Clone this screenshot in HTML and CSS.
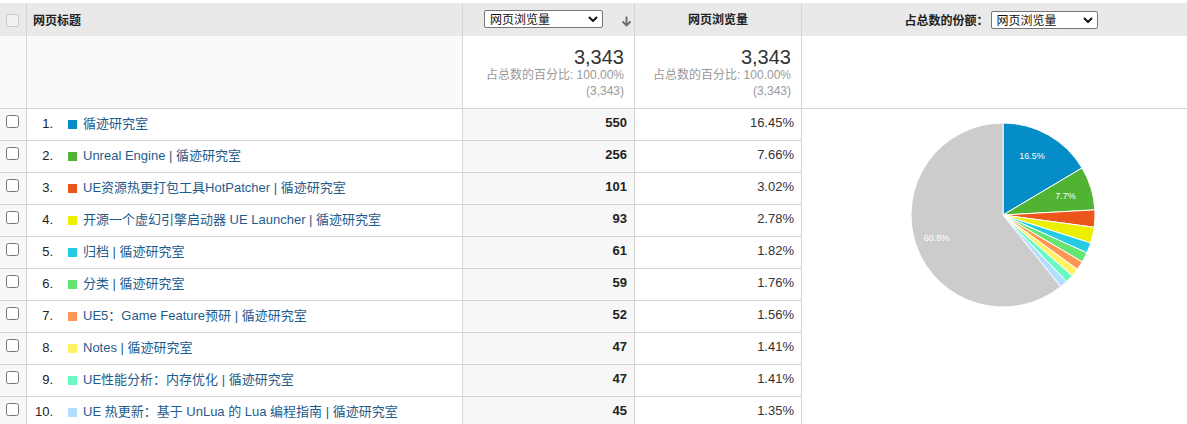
FILE: index.html
```html
<!DOCTYPE html>
<html lang="zh-CN">
<head>
<meta charset="utf-8">
<title>网页标题报告</title>
<link rel="stylesheet" href="styles.css">
</head>
<body>
<table class="report">
  <colgroup>
    <col class="c-cb">
    <col class="c-title">
    <col class="c-metric">
    <col class="c-pct">
    <col class="c-pie">
  </colgroup>
  <thead>
    <tr class="hdr">
      <th class="cb"><input type="checkbox" disabled></th>
      <th class="title">网页标题</th>
      <th class="metric">
        <div class="metric-head">
          <span class="sel w119"><select><option>网页浏览量</option></select><svg class="chev" viewBox="0 0 10 6" width="10" height="6"><path d="M1 1 L5 5 L9 1" fill="none" stroke="#111" stroke-width="2"/></svg></span>
          <svg class="sort" viewBox="0 0 11 11" width="11" height="11"><path d="M5.5 0.5 V9.5 M1.5 5.5 L5.5 9.5 L9.5 5.5" fill="none" stroke="#6b6b6b" stroke-width="1.8"/></svg>
        </div>
      </th>
      <th class="pct">网页浏览量</th>
      <th class="pie">
        <div class="pie-head">
          <span class="pie-label">占总数的份额：</span>
          <span class="sel w107"><select><option>网页浏览量</option></select><svg class="chev" viewBox="0 0 10 6" width="10" height="6"><path d="M1 1 L5 5 L9 1" fill="none" stroke="#111" stroke-width="2"/></svg></span>
        </div>
      </th>
    </tr>
  </thead>
  <tbody>
    <tr class="summary">
      <td class="cb"></td>
      <td class="title"></td>
      <td class="metric"><div class="big">3,343</div><div class="small">占总数的百分比: 100.00%</div><div class="small">(3,343)</div></td>
      <td class="pct"><div class="big">3,343</div><div class="small">占总数的百分比: 100.00%</div><div class="small">(3,343)</div></td>
      <td class="pie"></td>
    </tr>
    <tr class="row">
      <td class="cb"><input type="checkbox"></td>
      <td class="title"><span class="num">1.</span><span class="sq" style="background:#058dc7"></span><a href="#">循迹研究室</a></td>
      <td class="metric">550</td>
      <td class="pct">16.45%</td>
      <td class="pie chart" rowspan="10">
        <svg class="piechart" width="200" height="200" viewBox="0 0 200 200">
          <g stroke="#fff" stroke-width="1" stroke-linejoin="round">
            <path fill="#058dc7" d="M100,100 L100,8 A92,92 0 0,1 179.05,52.94 Z"/>
            <path fill="#50b432" d="M100,100 L179.05,52.94 A92,92 0 0,1 191.86,94.86 Z"/>
            <path fill="#ed561b" d="M100,100 L191.86,94.86 A92,92 0 0,1 191.18,112.28 Z"/>
            <path fill="#edef00" d="M100,100 L191.18,112.28 A92,92 0 0,1 187.65,127.96 Z"/>
            <path fill="#24cbe5" d="M100,100 L187.65,127.96 A92,92 0 0,1 183.88,137.80 Z"/>
            <path fill="#64e572" d="M100,100 L183.88,137.80 A92,92 0 0,1 179.19,146.85 Z"/>
            <path fill="#ff9655" d="M100,100 L179.19,146.85 A92,92 0 0,1 174.23,154.35 Z"/>
            <path fill="#fff263" d="M100,100 L174.23,154.35 A92,92 0 0,1 169.15,160.68 Z"/>
            <path fill="#6af9c4" d="M100,100 L169.15,160.68 A92,92 0 0,1 163.52,166.55 Z"/>
            <path fill="#b2deff" d="M100,100 L163.52,166.55 A92,92 0 0,1 157.67,171.68 Z"/>
            <path fill="#cccccc" d="M100,100 L157.67,171.68 A92,92 0 1,1 100,8 Z"/>
          </g>
          <g class="plabel" fill="#fff" text-anchor="middle">
            <text x="129" y="44">16.5%</text>
            <text x="162.5" y="84">7.7%</text>
            <text x="33.5" y="126">60.8%</text>
          </g>
        </svg>
      </td>
    </tr>
    <tr class="row">
      <td class="cb"><input type="checkbox"></td>
      <td class="title"><span class="num">2.</span><span class="sq" style="background:#50b432"></span><a href="#">Unreal Engine | 循迹研究室</a></td>
      <td class="metric">256</td>
      <td class="pct">7.66%</td>
    </tr>
    <tr class="row">
      <td class="cb"><input type="checkbox"></td>
      <td class="title"><span class="num">3.</span><span class="sq" style="background:#ed561b"></span><a href="#">UE资源热更打包工具HotPatcher | 循迹研究室</a></td>
      <td class="metric">101</td>
      <td class="pct">3.02%</td>
    </tr>
    <tr class="row">
      <td class="cb"><input type="checkbox"></td>
      <td class="title"><span class="num">4.</span><span class="sq" style="background:#edef00"></span><a href="#">开源一个虚幻引擎启动器 UE Launcher | 循迹研究室</a></td>
      <td class="metric">93</td>
      <td class="pct">2.78%</td>
    </tr>
    <tr class="row">
      <td class="cb"><input type="checkbox"></td>
      <td class="title"><span class="num">5.</span><span class="sq" style="background:#24cbe5"></span><a href="#">归档 | 循迹研究室</a></td>
      <td class="metric">61</td>
      <td class="pct">1.82%</td>
    </tr>
    <tr class="row">
      <td class="cb"><input type="checkbox"></td>
      <td class="title"><span class="num">6.</span><span class="sq" style="background:#64e572"></span><a href="#">分类 | 循迹研究室</a></td>
      <td class="metric">59</td>
      <td class="pct">1.76%</td>
    </tr>
    <tr class="row">
      <td class="cb"><input type="checkbox"></td>
      <td class="title"><span class="num">7.</span><span class="sq" style="background:#ff9655"></span><a href="#">UE5：Game Feature预研 | 循迹研究室</a></td>
      <td class="metric">52</td>
      <td class="pct">1.56%</td>
    </tr>
    <tr class="row">
      <td class="cb"><input type="checkbox"></td>
      <td class="title"><span class="num">8.</span><span class="sq" style="background:#fff263"></span><a href="#">Notes | 循迹研究室</a></td>
      <td class="metric">47</td>
      <td class="pct">1.41%</td>
    </tr>
    <tr class="row">
      <td class="cb"><input type="checkbox"></td>
      <td class="title"><span class="num">9.</span><span class="sq" style="background:#6af9c4"></span><a href="#">UE性能分析：内存优化 | 循迹研究室</a></td>
      <td class="metric">47</td>
      <td class="pct">1.41%</td>
    </tr>
    <tr class="row">
      <td class="cb"><input type="checkbox"></td>
      <td class="title"><span class="num">10.</span><span class="sq" style="background:#b2deff"></span><a href="#">UE 热更新：基于 UnLua 的 Lua 编程指南 | 循迹研究室</a></td>
      <td class="metric">45</td>
      <td class="pct">1.35%</td>
    </tr>
  </tbody>
</table>
</body>
</html>
```

FILE: styles.css
```css
html, body {
  margin: 0;
  padding: 0;
  background: #fff;
}
body {
  font-family: "Liberation Sans", Arial, "Noto Sans CJK SC", sans-serif;
  font-size: 13px;
  color: #222;
  overflow: hidden;
}
.report {
  margin-top: 3px;
  table-layout: fixed;
  border-collapse: separate;
  border-spacing: 0;
  width: 1187px;
}
.c-cb { width: 27px; }
.c-title { width: 436px; }
.c-metric { width: 172px; }
.c-pct { width: 167px; }
.c-pie { width: 385px; }

.report th,
.report td {
  box-sizing: border-box;
  padding: 0;
  white-space: nowrap;
  overflow: hidden;
}

/* header */
.hdr th {
  height: 33px;
  background: #e9e9e9;
  font-size: 12px;
  font-weight: bold;
  color: #222;
  vertical-align: middle;
  border-right: 1px solid #d5d5d5;
}
.hdr th.pie { border-right: 0; }
.hdr th.cb { padding-left: 6px; text-align: left; }
.hdr th.title { text-align: left; padding-left: 6px; padding-bottom: 1px; }
.hdr th.pct { text-align: center; padding-bottom: 3px; }
.hdr input { display: block; margin: 1px 0 0 0; width: 13px; height: 13px; }

.metric-head {
  display: flex;
  align-items: center;
  justify-content: flex-end;
  padding-right: 2px;
}
.metric-head .sel { margin-right: 18px; margin-bottom: 2px; }
.sort { display: block; margin-top: 3px; }

.pie-head {
  display: flex;
  align-items: center;
  justify-content: center;
  padding-left: 13px;
  gap: 2px;
}
.pie-label { font-weight: bold; }

.sel {
  position: relative;
  display: inline-block;
}
.sel select {
  display: block;
  appearance: none;
  -webkit-appearance: none;
  box-sizing: border-box;
  height: 18px;
  margin: 0;
  padding: 0 0 0 5px;
  border: 1px solid #767676;
  border-radius: 2px;
  background: #fff;
  font-family: "Noto Sans CJK SC", "Liberation Sans", sans-serif;
  font-size: 12px;
  font-weight: normal;
  line-height: 16px;
  color: #111;
}
.w119 select { width: 119px; }
.w107 select { width: 107px; }
.chev {
  position: absolute;
  right: 5px;
  top: 6px;
  pointer-events: none;
}

/* summary */
.summary td {
  height: 73px;
  vertical-align: top;
  border-bottom: 1px solid #d5d5d5;
}
.summary td.cb,
.summary td.title {
  background: #fafafa;
  border-right: 1px solid #d5d5d5;
}
.summary td.metric,
.summary td.pct {
  background: #fff;
  text-align: right;
  padding: 12px 10px 0 0;
  border-right: 1px solid #d5d5d5;
}
.big {
  font-size: 20px;
  line-height: 19px;
  color: #333;
}
.small {
  font-size: 12px;
  line-height: 16px;
  color: #999;
  font-family: "Liberation Sans", Arial, "Noto Sans CJK SC", sans-serif;
}

/* rows */
.row td {
  height: 32px;
  border-bottom: 1px solid #d5d5d5;
  vertical-align: middle;
}
.row td.cb {
  background: #f8f8f8;
  border-right: 1px solid #d5d5d5;
  padding-left: 6px;
  vertical-align: top;
  padding-top: 6px;
}
.row td.cb input {
  display: block;
  margin: 0;
  width: 13px;
  height: 13px;
}
.row td.title {
  border-right: 1px solid #d5d5d5;
  background: #fff;
  padding-bottom: 4px;
}
.num {
  display: inline-block;
  width: 26px;
  text-align: right;
  color: #222;
}
.sq {
  display: inline-block;
  width: 9px;
  height: 9px;
  margin: 0 6px 0 15px;
  vertical-align: -0.5px;
}
.title a {
  color: #1f5c8c;
  text-decoration: none;
}
.row td.metric {
  background: #f7f7f7;
  text-align: right;
  font-weight: bold;
  padding: 0 7px 4px 0;
  border-right: 1px solid #d5d5d5;
  color: #222;
}
.row td.pct {
  background: #fff;
  text-align: right;
  padding: 0 7px 4px 0;
  border-right: 1px solid #d5d5d5;
  color: #333;
}
.row td.chart {
  border-bottom: 0;
  vertical-align: top;
  padding: 6px 0 0 101px;
  background: #fff;
}
.piechart { display: block; }
.plabel {
  font-family: "Liberation Sans", Arial, sans-serif;
  font-size: 9px;
}
```
